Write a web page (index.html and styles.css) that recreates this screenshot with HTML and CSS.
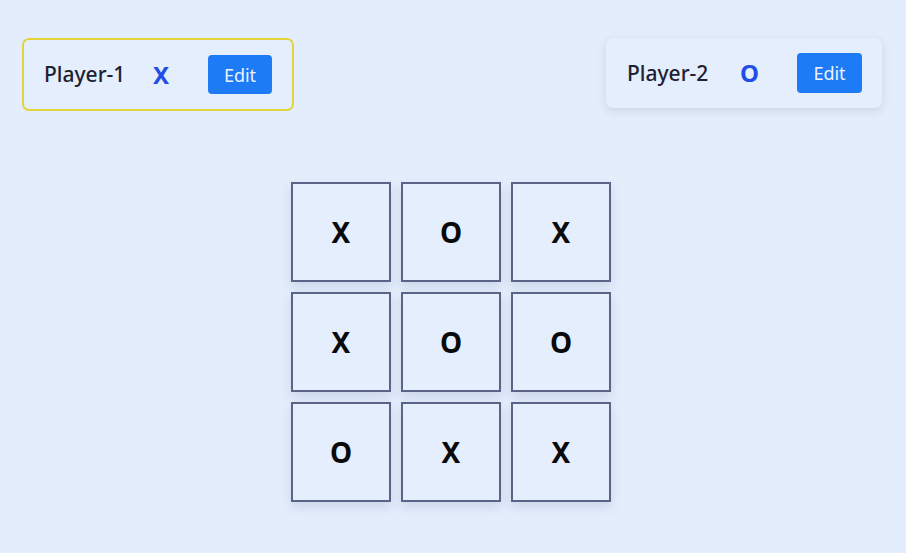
FILE: index.html
```html
<!DOCTYPE html>
<html lang="en">
<head>
<meta charset="utf-8">
<title>Tic Tac Toe</title>
<link rel="stylesheet" href="styles.css">
</head>
<body>
<header class="players">
  <div class="player player-active">
    <span class="player-name">Player-1</span>
    <span class="player-symbol">X</span>
    <button class="edit-btn">Edit</button>
  </div>
  <div class="player player-idle">
    <span class="player-name">Player-2</span>
    <span class="player-symbol">O</span>
    <button class="edit-btn">Edit</button>
  </div>
</header>
<main class="board-wrap">
  <div class="board">
    <div class="cell">X</div>
    <div class="cell">O</div>
    <div class="cell">X</div>
    <div class="cell">X</div>
    <div class="cell">O</div>
    <div class="cell">O</div>
    <div class="cell">O</div>
    <div class="cell">X</div>
    <div class="cell">X</div>
  </div>
</main>
</body>
</html>
```

FILE: styles.css
```css
* { box-sizing: border-box; }
html, body { margin: 0; padding: 0; }
body {
  background: #e3edfc;
  font-family: "Noto Sans", "Open Sans", sans-serif;
  color: #1c2133;
  width: 906px;
  height: 553px;
  overflow: hidden;
}
.players {
  display: flex;
  justify-content: space-between;
  align-items: flex-start;
  padding: 38px 24px 0 22px;
}
.player {
  display: flex;
  align-items: center;
  border-radius: 7px;
  background: #e5eefc;
}
.player-active {
  width: 272px;
  height: 73px;
  border: 2px solid #e3d43e;
  padding: 0 20px 0 20px;
}
.player-idle {
  width: 276px;
  height: 70px;
  padding: 0 20px 0 21px;
  box-shadow: 0 3px 8px rgba(60, 80, 120, 0.15);
}
.player-name {
  font-size: 21px;
  font-weight: 500;
  line-height: 1;
  width: 109px;
}
.player-symbol {
  font-size: 24px;
  font-weight: 700;
  color: #1f4fe6;
  line-height: 1;
  flex: 1;
}
.player-idle .player-name { width: 113px; }
.edit-btn {
  font-family: "Noto Sans", "Open Sans", sans-serif;
  font-size: 18px;
  font-weight: 400;
  color: #eef2ff;
  background: #1e7bf6;
  border: none;
  border-radius: 4px;
  width: 64px;
  height: 39px;
  padding: 0;
  line-height: 1;
}
.player-idle .edit-btn { width: 65px; height: 40px; }
.board-wrap {
  display: flex;
  justify-content: center;
  padding-right: 4px;
  margin-top: 71px;
}
.board {
  display: grid;
  grid-template-columns: repeat(3, 100px);
  grid-auto-rows: 100px;
  gap: 10px;
}
.cell {
  border: 2px solid #5a6486;
  background: #e5eefc;
  box-shadow: 0 5px 10px rgba(60, 80, 120, 0.14);
  display: flex;
  align-items: center;
  justify-content: center;
  font-size: 28px;
  font-weight: 700;
  color: #0a0a0a;
}
```
